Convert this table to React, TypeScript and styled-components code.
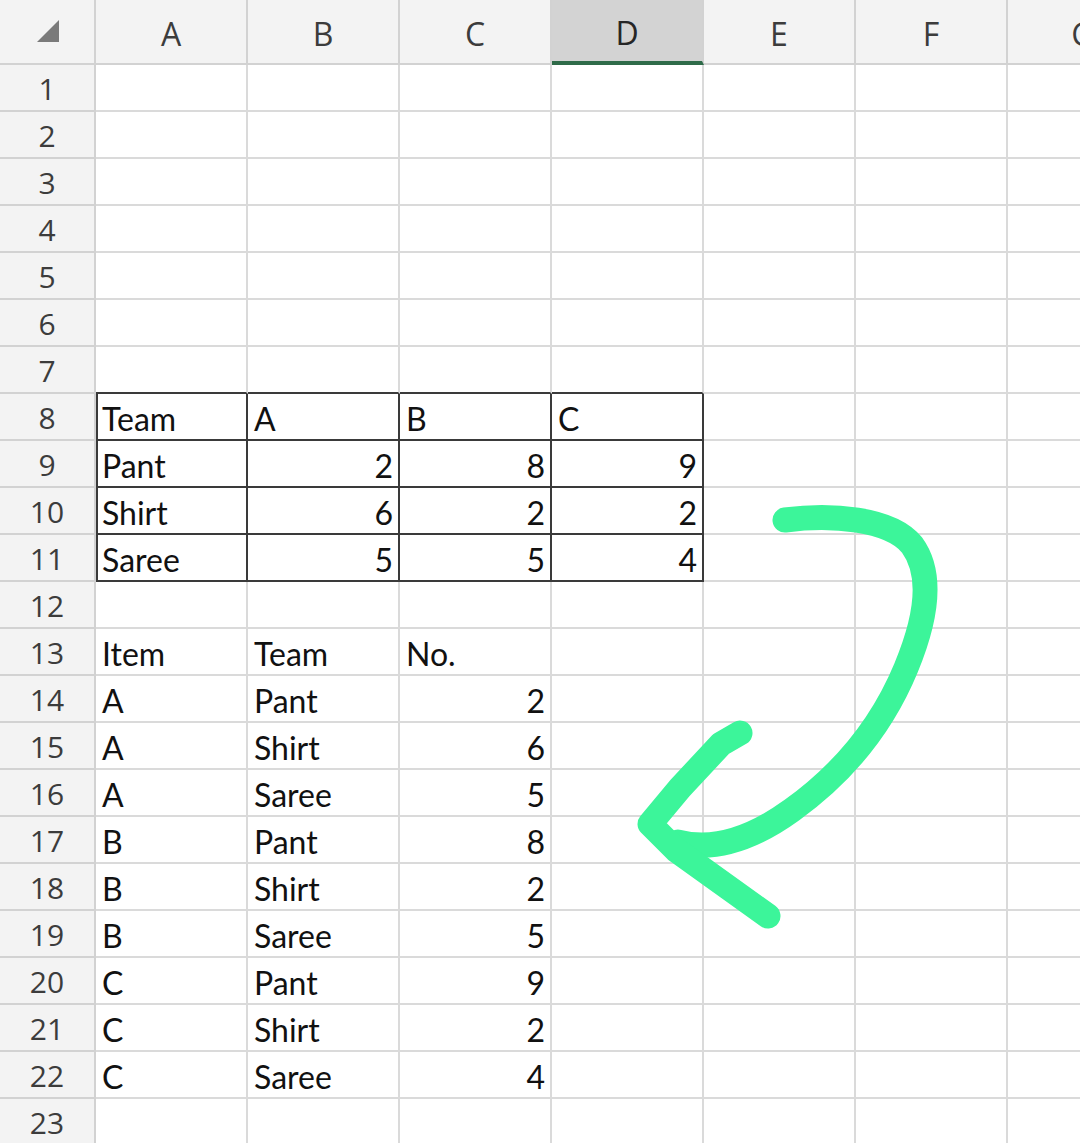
import React from 'react';
import styled, { createGlobalStyle } from 'styled-components';

const GRID = '#dadada';
const HEAD_LINE = '#d2d2d2';
const DARK = '#3a3a3a';

const GlobalStyle = createGlobalStyle`
  html, body {
    margin: 0;
    padding: 0;
    background: #ffffff;
  }
  body {
    width: 1080px;
    height: 1143px;
    overflow: hidden;
  }
`;

type Value = string | number;

const COLUMNS = ['A', 'B', 'C', 'D', 'E', 'F', 'G'];
const ROW_COUNT = 23;
const SELECTED_COLUMN = 'D';

// sheet contents, keyed by row number
const SHEET: Record<number, Value[]> = {
  8: ['Team', 'A', 'B', 'C'],
  9: ['Pant', 2, 8, 9],
  10: ['Shirt', 6, 2, 2],
  11: ['Saree', 5, 5, 4],
  13: ['Item', 'Team', 'No.'],
  14: ['A', 'Pant', 2],
  15: ['A', 'Shirt', 6],
  16: ['A', 'Saree', 5],
  17: ['B', 'Pant', 8],
  18: ['B', 'Shirt', 2],
  19: ['B', 'Saree', 5],
  20: ['C', 'Pant', 9],
  21: ['C', 'Shirt', 2],
  22: ['C', 'Saree', 4],
};

// bordered table range (rows 8..11, columns A..D)
const BOX = { top: 8, bottom: 11, left: 0, right: 3 };

const inBox = (row: number, col: number) =>
  row >= BOX.top && row <= BOX.bottom && col >= BOX.left && col <= BOX.right;

const App: React.FC = () => {
  const rows = Array.from({ length: ROW_COUNT }, (_, i) => i + 1);

  return (
    <>
      <GlobalStyle />
      <Window>
        <Sheet>
          <Corner>
            <svg width="24" height="24" viewBox="0 0 24 24">
              <polygon points="23,1 23,23 1,23" fill="#7a7a7a" />
            </svg>
          </Corner>
          {COLUMNS.map(col => (
            <ColumnHeader key={col} $selected={col === SELECTED_COLUMN}>
              {col}
            </ColumnHeader>
          ))}

          {rows.map(row => (
            <React.Fragment key={row}>
              <RowHeader>{row}</RowHeader>
              {COLUMNS.map((col, ci) => {
                const value = SHEET[row]?.[ci];
                const boxed = inBox(row, ci);
                const aboveBox = row === BOX.top - 1 && ci >= BOX.left && ci <= BOX.right;
                return (
                  <Cell
                    key={col}
                    $numeric={typeof value === 'number'}
                    $darkRight={boxed}
                    $darkBottom={boxed || aboveBox}
                    $darkLeft={boxed && ci === BOX.left}
                  >
                    {value}
                  </Cell>
                );
              })}
            </React.Fragment>
          ))}
        </Sheet>

        {/* hand-drawn arrow over the sheet */}
        <Scribble width="1080" height="1143" viewBox="0 0 1080 1143">
          <g
            fill="none"
            stroke="#3cf59a"
            strokeWidth="25"
            strokeLinecap="round"
            strokeLinejoin="round"
          >
            <path d="M785 520 C 830 514, 890 518, 912 545 C 934 575, 926 620, 906 668 C 882 726, 842 774, 792 810 C 756 836, 716 852, 678 842" />
            <path d="M740 733 L721 744 L680 788 L650 824 L676 850 L768 916" />
          </g>
        </Scribble>
      </Window>
    </>
  );
};

const Window = styled.div`
  position: relative;
  width: 1080px;
  height: 1143px;
  overflow: hidden;
  background: #ffffff;
`;

const Sheet = styled.div`
  display: grid;
  grid-template-columns: 96px repeat(7, 152px);
  grid-template-rows: 65px repeat(${ROW_COUNT}, 47px);
`;

const HeaderBase = styled.div`
  box-sizing: border-box;
  display: flex;
  align-items: center;
  justify-content: center;
  background: #f3f3f3;
  color: #3c3c3c;
  font-family: 'Open Sans', 'Noto Sans', sans-serif;
  border-right: 2px solid ${HEAD_LINE};
  border-bottom: 2px solid ${HEAD_LINE};
`;

const Corner = styled(HeaderBase)`
  justify-content: flex-start;
  padding: 0 0 0 36px;
  svg {
    margin-bottom: 2px;
  }
`;

const ColumnHeader = styled(HeaderBase)<{ $selected?: boolean }>`
  font-size: 32px;
  padding-top: 4px;
  background: ${({ $selected }) => ($selected ? '#d3d3d3' : '#f3f3f3')};
  border-bottom: ${({ $selected }) => ($selected ? '4px solid #2f6b49' : `2px solid ${HEAD_LINE}`)};
  color: ${({ $selected }) => ($selected ? '#262626' : '#3c3c3c')};
`;

const RowHeader = styled(HeaderBase)`
  font-size: 30px;
  padding-top: 2px;
`;

const Cell = styled.div<{
  $numeric?: boolean;
  $darkRight?: boolean;
  $darkBottom?: boolean;
  $darkLeft?: boolean;
}>`
  box-sizing: border-box;
  display: flex;
  align-items: center;
  justify-content: ${({ $numeric }) => ($numeric ? 'flex-end' : 'flex-start')};
  padding: 4px 5px 0 6px;
  font-family: 'Lato', 'Open Sans', sans-serif;
  font-size: 32px;
  color: #111111;
  white-space: nowrap;
  overflow: hidden;
  border-right: 2px solid ${({ $darkRight }) => ($darkRight ? DARK : GRID)};
  border-bottom: 2px solid ${({ $darkBottom }) => ($darkBottom ? DARK : GRID)};
  box-shadow: ${({ $darkLeft }) => ($darkLeft ? `inset 2px 0 0 ${DARK}` : 'none')};
`;

const Scribble = styled.svg`
  position: absolute;
  top: 0;
  left: 0;
  pointer-events: none;
`;

export default App;
